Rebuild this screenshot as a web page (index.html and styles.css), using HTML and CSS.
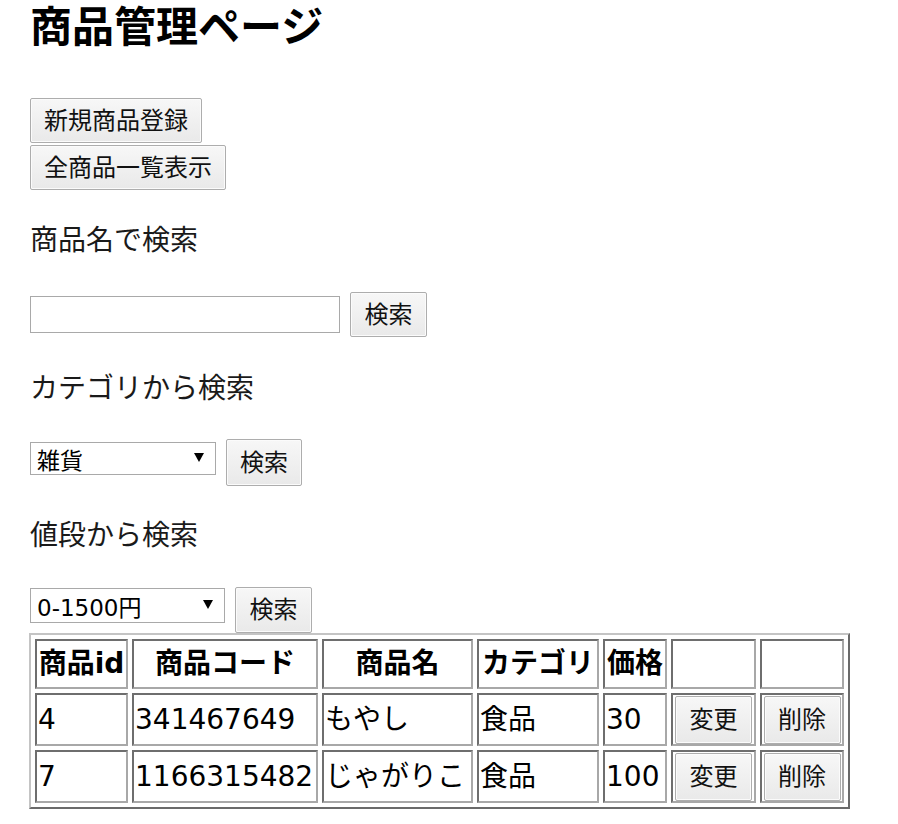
FILE: index.html
```html
<!DOCTYPE html>
<html lang="ja">
<head>
<meta charset="utf-8">
<title>商品管理ページ</title>
<link rel="stylesheet" href="styles.css">
</head>
<body>
<div class="page">
  <h1 class="title">商品管理ページ</h1>

  <div class="actions">
    <button class="btn btn-top">新規商品登録</button>
    <button class="btn btn-top">全商品一覧表示</button>
  </div>

  <p class="label label-1">商品名で検索</p>
  <div class="row row-1">
    <input class="text-input" type="text">
    <button class="btn btn-search">検索</button>
  </div>

  <p class="label label-2">カテゴリから検索</p>
  <div class="row row-2">
    <span class="select-wrap select-cat">
      <select class="select"><option>雑貨</option></select>
      <span class="arrow"></span>
    </span>
    <button class="btn btn-search btn-search-2">検索</button>
  </div>

  <p class="label label-3">値段から検索</p>
  <div class="row row-3">
    <span class="select-wrap select-price">
      <select class="select"><option>0-1500円</option></select>
      <span class="arrow"></span>
    </span>
    <button class="btn btn-search btn-search-3">検索</button>
  </div>

  <table class="products">
    <thead>
      <tr>
        <th class="c-id">商品id</th>
        <th class="c-code">商品コード</th>
        <th class="c-name">商品名</th>
        <th class="c-cat">カテゴリ</th>
        <th class="c-price">価格</th>
        <th class="c-btn"></th>
        <th class="c-btn2"></th>
      </tr>
    </thead>
    <tbody>
      <tr>
        <td>4</td>
        <td>341467649</td>
        <td>もやし</td>
        <td>食品</td>
        <td>30</td>
        <td class="cell-btn"><button class="btn btn-row">変更</button></td>
        <td class="cell-btn"><button class="btn btn-row">削除</button></td>
      </tr>
      <tr>
        <td>7</td>
        <td>1166315482</td>
        <td>じゃがりこ</td>
        <td>食品</td>
        <td>100</td>
        <td class="cell-btn"><button class="btn btn-row">変更</button></td>
        <td class="cell-btn"><button class="btn btn-row">削除</button></td>
      </tr>
    </tbody>
  </table>
</div>
</body>
</html>
```

FILE: styles.css
```css
html, body {
  margin: 0;
  padding: 0;
  background: #fff;
}

body {
  font-family: "DejaVu Sans", "Noto Sans CJK JP", sans-serif;
  color: #000;
}

.page {
  padding-left: 30px;
}

.title {
  margin: 0;
  padding-top: 3px;
  font-size: 42px;
  line-height: 50px;
  font-weight: bold;
}

.actions {
  margin-top: 45px;
  display: flex;
  flex-direction: column;
  align-items: flex-start;
  gap: 2px;
}

.btn {
  font-family: "DejaVu Sans", "Noto Sans CJK JP", sans-serif;
  font-size: 24px;
  color: #111;
  padding: 0 13px;
  border: 1px solid #adadad;
  border-radius: 2px;
  background: linear-gradient(#f7f7f7, #e9e9e9);
  box-shadow: inset 0 0 0 1px #fbfbfb;
  line-height: 1;
  box-sizing: border-box;
}

.btn-top {
  height: 45px;
}

.label {
  margin: 0;
  font-size: 28px;
  line-height: 40px;
  color: #1a1a1a;
}

.label-1 { margin-top: 31px; }
.label-2 { margin-top: 32px; }
.label-3 { margin-top: 30px; }

.row {
  display: flex;
  align-items: flex-start;
  gap: 10px;
}

.row-1 {
  margin-top: 31px;
  align-items: center;
}
.row-2 { margin-top: 30px; }
.row-3 { margin-top: 31px; }

.text-input {
  width: 310px;
  height: 37px;
  box-sizing: border-box;
  border: 1px solid #a9a9a9;
  padding: 0 6px;
  font-size: 24px;
  margin: 0;
}

.btn-search {
  height: 45px;
  width: 77px;
  padding: 0;
}

.btn-search-2 { height: 47px; width: 76px; }
.btn-search-3 { height: 46px; width: 77px; }

.select-wrap {
  position: relative;
  display: block;
}

.select-cat { margin-top: 3px; }
.select-price { margin-top: 1px; }

.select {
  appearance: none;
  -webkit-appearance: none;
  display: block;
  box-sizing: border-box;
  border: 1px solid #a9a9a9;
  background: #fff;
  font-family: "DejaVu Sans", "Noto Sans CJK JP", sans-serif;
  font-size: 23px;
  color: #000;
  padding: 4px 6px 0 6px;
  margin: 0;
  border-radius: 0;
}

.select-cat .select { width: 186px; height: 33px; }
.select-price .select { width: 195px; height: 35px; }

.arrow {
  position: absolute;
  right: 12px;
  top: 11px;
  width: 0;
  height: 0;
  border-left: 5px solid transparent;
  border-right: 5px solid transparent;
  border-top: 9px solid #000;
}

.select-price .arrow { top: 12px; }

.products {
  margin-left: -1px;
  border-collapse: separate;
  border-spacing: 4px;
  border: 2px solid;
  border-color: #c4c4c4 #6a6a6a #6a6a6a #c4c4c4;
  table-layout: fixed;
  font-size: 28px;
}

.products th,
.products td {
  box-sizing: border-box;
  border: 2px solid;
  border-color: #6e6e6e #a8a8a8 #a8a8a8 #6e6e6e;
  padding: 0 1px;
  white-space: nowrap;
  line-height: 34px;
}

.products th {
  height: 50px;
  font-weight: bold;
  text-align: center;
}

.products td {
  height: 53px;
  text-align: left;
}

.c-id { width: 93px; }
.c-code { width: 186px; }
.c-name { width: 151px; }
.c-cat { width: 122px; }
.c-price { width: 64px; }
.c-btn { width: 85px; }
.c-btn2 { width: 84px; }

.products td.cell-btn {
  padding: 0;
  text-align: center;
}

.btn-row {
  display: block;
  margin: 0 auto;
  width: 77px;
  height: 48px;
  padding: 0;
}
```
